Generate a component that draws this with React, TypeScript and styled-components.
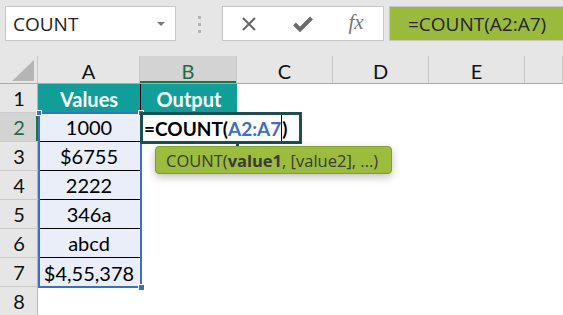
import React from "react"
import styled, { createGlobalStyle, css } from "styled-components"

const GlobalStyle = createGlobalStyle`
  html, body {
    margin: 0;
    padding: 0;
    background: #fff;
    overflow: hidden;
  }
`

const UI_FONT = `"Open Sans", "Noto Sans", sans-serif`
const CELL_FONT = `Lato, "Liberation Sans", sans-serif`
const COLS = "38px 102px 97px 96px 96px 96px 1fr"

const rows = [
  { n: 2, value: "1000" },
  { n: 3, value: "$6755" },
  { n: 4, value: "2222" },
  { n: 5, value: "346a" },
  { n: 6, value: "abcd" },
  { n: 7, value: "$4,55,378" },
]

export default function App() {
  return (
    <Page>
      <GlobalStyle />
      <TopBar>
        <NameBox>
          <span>COUNT</span>
          <Caret />
        </NameBox>
        <Grip>
          <i />
          <i />
          <i />
        </Grip>
        <ButtonBox>
          <IconSlot>
            <svg width="16" height="16" viewBox="0 0 16 16">
              <path d="M2 2 L14 14 M14 2 L2 14" stroke="#6b6b6b" strokeWidth="2.2" fill="none" />
            </svg>
          </IconSlot>
          <IconSlot>
            <svg width="20" height="16" viewBox="0 0 20 16">
              <path d="M1.5 8 L7 13.5 L18.5 2" stroke="#6b6b6b" strokeWidth="4" fill="none" strokeLinejoin="miter" />
            </svg>
          </IconSlot>
          <FxGlyph>fx</FxGlyph>
        </ButtonBox>
        <FormulaBar>=COUNT(A2:A7)</FormulaBar>
      </TopBar>

      <Sheet>
        <HeaderRow>
          <Corner>
            <svg width="22" height="21" viewBox="0 0 22 21">
              <polygon points="22,0 22,21 0,21" fill="#b5b5b5" />
            </svg>
          </Corner>
          <ColHead>A</ColHead>
          <ColHead $active>B</ColHead>
          <ColHead>C</ColHead>
          <ColHead>D</ColHead>
          <ColHead>E</ColHead>
          <ColHead />
        </HeaderRow>

        <Row>
          <RowHead>1</RowHead>
          <Cell $kind="title">Values</Cell>
          <Cell $kind="title" $leftLine>Output</Cell>
          <Cell />
          <Cell />
          <Cell />
          <Cell />
        </Row>

        {rows.map((r, i) => (
          <Row key={r.n}>
            <RowHead $active={r.n === 2}>{r.n}</RowHead>
            <Cell $kind="value" $underline={i < rows.length - 1}>
              {r.value}
            </Cell>
            <Cell />
            <Cell />
            <Cell />
            <Cell />
            <Cell />
          </Row>
        ))}

        <Row>
          <RowHead>8</RowHead>
          <Cell />
          <Cell />
          <Cell />
          <Cell />
          <Cell />
          <Cell />
        </Row>

        <Selection>
          <Handle $pos="tl" />
          <Handle $pos="tr" />
          <Handle $pos="br" />
        </Selection>

        <EditBox>
          =COUNT(<Ref>A2:A7</Ref>
          <Cursor />)
        </EditBox>

        <Tip>
          COUNT(<b>value1</b>, [value2], ...)
        </Tip>
      </Sheet>
    </Page>
  )
}

const Page = styled.div`
  width: 563px;
  height: 315px;
  overflow: hidden;
  background: #fff;
`

const TopBar = styled.div`
  height: 56px;
  box-sizing: border-box;
  background: #e6e6e6;
  display: flex;
  align-items: flex-start;
  padding: 6px 0 0 5px;
`

const NameBox = styled.div`
  width: 171px;
  height: 35px;
  box-sizing: border-box;
  background: #fff;
  border: 1px solid #c6c6c6;
  display: flex;
  align-items: center;
  justify-content: space-between;
  padding: 0 10px 0 7px;
  font-family: ${UI_FONT};
  font-size: 19px;
  color: #222;
`

const Caret = styled.span`
  width: 0;
  height: 0;
  border-left: 4px solid transparent;
  border-right: 4px solid transparent;
  border-top: 4px solid #7a7a7a;
  margin-top: 1px;
`

const Grip = styled.div`
  width: 46px;
  display: flex;
  flex-direction: column;
  align-items: center;
  gap: 4px;
  padding-top: 10px;

  i {
    width: 3px;
    height: 3px;
    background: #b3b3b3;
    display: block;
  }
`

const ButtonBox = styled.div`
  width: 162px;
  height: 35px;
  box-sizing: border-box;
  background: #fff;
  border: 1px solid #c6c6c6;
  display: grid;
  grid-template-columns: 52px 56px 1fr;
  align-items: center;
  justify-items: center;
`

const IconSlot = styled.div`
  display: flex;
  align-items: center;
  justify-content: center;
`

const FxGlyph = styled.span`
  font-family: "Liberation Serif", "DejaVu Serif", serif;
  font-style: italic;
  font-size: 21px;
  color: #777;
  margin-right: 2px;
  margin-top: -2px;
`

const FormulaBar = styled.div`
  margin-left: 5px;
  flex: 1;
  height: 35px;
  box-sizing: border-box;
  background: #9aba3c;
  border: 1px solid #c6c6c6;
  border-right: none;
  display: flex;
  align-items: center;
  padding-left: 18px;
  font-family: ${UI_FONT};
  font-size: 19px;
  color: #262626;
  white-space: nowrap;
`

const Sheet = styled.div`
  position: relative;
`

const rowGrid = css`
  display: grid;
  grid-template-columns: ${COLS};
`

const HeaderRow = styled.div`
  ${rowGrid};
  height: 28px;
  background: #e6e6e6;
  box-sizing: border-box;
  border-bottom: 1px solid #ababab;
`

const Corner = styled.div`
  display: flex;
  align-items: flex-end;
  justify-content: flex-end;
  padding: 0 3px 2px 0;
  border-right: 1px solid #c6c6c6;
`

const ColHead = styled.div<{ $active?: boolean }>`
  display: flex;
  align-items: center;
  justify-content: center;
  font-family: ${CELL_FONT};
  font-size: 20px;
  color: ${(p) => (p.$active ? "#1e6b40" : "#111")};
  background: ${(p) => (p.$active ? "#d3d3d3" : "transparent")};
  border-right: 1px solid #c6c6c6;
  box-shadow: ${(p) => (p.$active ? "inset 0 -2px 0 #217346" : "none")};
  padding-top: 2px;
`

const Row = styled.div`
  ${rowGrid};
  height: 29px;
`

const RowHead = styled.div<{ $active?: boolean }>`
  display: flex;
  align-items: center;
  justify-content: center;
  background: ${(p) => (p.$active ? "#d3d3d3" : "#e6e6e6")};
  border-bottom: 1px solid #cacaca;
  box-shadow: ${(p) => (p.$active ? "inset -2px 0 0 #217346" : "inset -1px 0 0 #b5b5b5")};
  font-family: ${CELL_FONT};
  font-size: 20px;
  color: ${(p) => (p.$active ? "#1e6b40" : "#111")};
  box-sizing: border-box;
`

const Cell = styled.div<{ $kind?: "title" | "value"; $underline?: boolean; $leftLine?: boolean }>`
  display: flex;
  align-items: center;
  justify-content: center;
  font-family: ${CELL_FONT};
  font-size: 20px;
  color: #000;
  box-sizing: border-box;
  white-space: nowrap;
  ${(p) =>
    p.$kind === "title" &&
    css`
      background: #0f9e99;
      color: #fff;
      font-weight: 700;
    `}
  ${(p) =>
    p.$kind === "value" &&
    css`
      background: #e9eef8;
    `}
  ${(p) =>
    p.$underline &&
    css`
      border-bottom: 1px solid #000;
    `}
  ${(p) =>
    p.$leftLine &&
    css`
      border-left: 1px solid #000;
    `}
`

const Selection = styled.div`
  position: absolute;
  left: 38px;
  top: 56px;
  width: 104px;
  height: 176px;
  box-sizing: border-box;
  border: 2px solid #3a6fc8;
  pointer-events: none;
`

const Handle = styled.span<{ $pos: "tl" | "tr" | "br" }>`
  position: absolute;
  background: #3a6fc8;
  border: 1px solid #fff;
  ${(p) =>
    p.$pos === "tl" &&
    css`
      width: 4px;
      height: 4px;
      left: -4px;
      top: -4px;
    `}
  ${(p) =>
    p.$pos === "tr" &&
    css`
      width: 4px;
      height: 4px;
      right: -4px;
      top: -4px;
    `}
  ${(p) =>
    p.$pos === "br" &&
    css`
      width: 5px;
      height: 5px;
      right: -5px;
      bottom: -5px;
    `}
`

const EditBox = styled.div`
  position: absolute;
  left: 140px;
  top: 56px;
  width: 162px;
  height: 32px;
  box-sizing: border-box;
  border: 3px solid #1c4f51;
  background: #fff;
  display: flex;
  align-items: center;
  padding-left: 1px;
  font-family: ${CELL_FONT};
  font-weight: 700;
  font-size: 19px;
  color: #000;
  white-space: nowrap;

  &::after {
    content: "";
    position: absolute;
    left: 93px;
    bottom: -6px;
    width: 3px;
    height: 3px;
    background: #1c4f51;
  }
`

const Ref = styled.span`
  color: #3d6fc9;
`

const Cursor = styled.span`
  display: inline-block;
  width: 1px;
  height: 26px;
  background: #000;
`

const Tip = styled.div`
  position: absolute;
  left: 155px;
  top: 90px;
  width: 237px;
  height: 28px;
  box-sizing: border-box;
  background: #9cbc3b;
  border: 1px solid #7f9e2e;
  border-radius: 4px;
  box-shadow: 0 3px 8px rgba(0, 0, 0, 0.25);
  display: flex;
  align-items: center;
  padding-left: 10px;
  font-family: ${UI_FONT};
  font-size: 16.5px;
  color: #3a3a3a;
  white-space: nowrap;

  b {
    font-weight: 700;
  }
`
